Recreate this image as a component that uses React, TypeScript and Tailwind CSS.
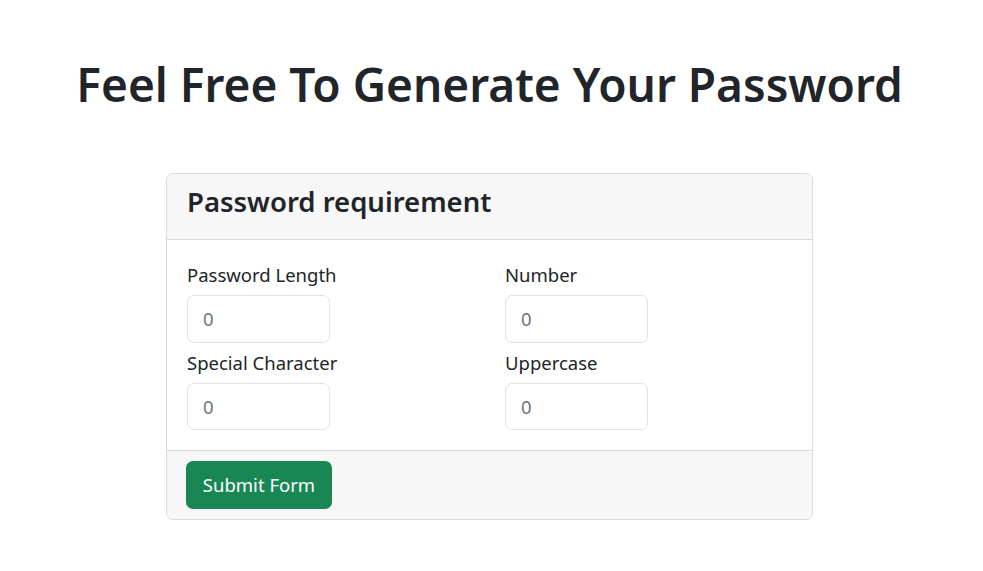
export default function App() {
  const fields = [
    ["Password Length", "Number"],
    ["Special Character", "Uppercase"],
  ];
  return (
    <div className="min-h-[571px] bg-white text-[#212529]" style={{ fontFamily: '"Noto Sans", "Open Sans", sans-serif' }}>
      <h1 className="pt-[54px] text-center text-[46px] leading-[60px] font-semibold pr-[4px]">
        Feel Free To Generate Your Password
      </h1>
      <div className="mt-[59px] ml-[166px] w-[647px] rounded-[7px] border border-[#dadada] overflow-hidden">
        <div className="h-[66px] bg-[#f7f7f7] border-b border-[#dadada] px-[20px] pt-[10px]">
          <h4 className="text-[27.5px] leading-[36px] font-semibold">Password requirement</h4>
        </div>
        <div className="p-[20px] flex flex-col gap-[5px]">
          {fields.map((row, i) => (
            <div key={i} className="grid grid-cols-[318px_1fr]">
              {row.map((label) => (
                <div key={label} className="flex flex-col gap-[5px]">
                  <label className="text-[18.5px] leading-[30px]">{label}</label>
                  <input
                    type="number"
                    placeholder="0"
                    className="w-[143px] h-[47.5px] rounded-[7px] border border-[#dee2e6] px-[15px] text-[18.5px] placeholder:text-[#6c757d] outline-none"
                  />
                </div>
              ))}
            </div>
          ))}
        </div>
        <div className="bg-[#f7f7f7] border-t border-[#dadada] px-[20px] py-[10px]">
          <button className="w-[146px] h-[47.5px] rounded-[7px] bg-[#198754] text-white text-[18.5px] leading-[30px] -ml-[1px]">
            Submit Form
          </button>
        </div>
      </div>
    </div>
  );
}
